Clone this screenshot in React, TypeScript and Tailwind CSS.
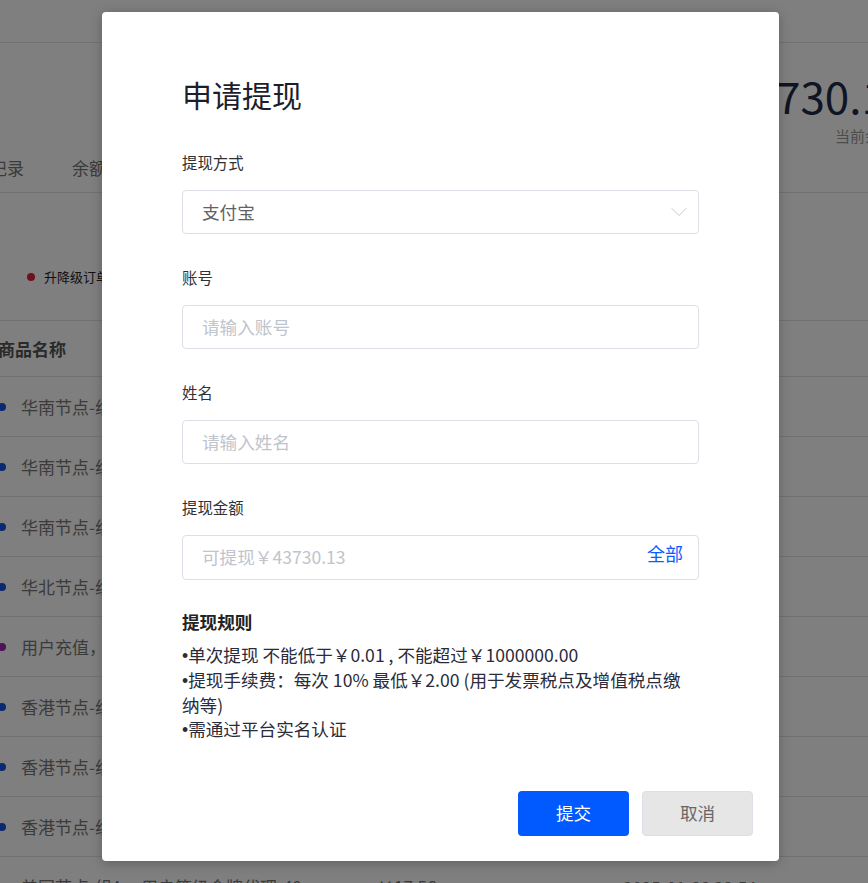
import { ChevronDown } from "lucide-react";

const ROWS = [
  { dot: "bg-[#1452e6]", name: "华南节点-组A" },
  { dot: "bg-[#1452e6]", name: "华南节点-组B" },
  { dot: "bg-[#1452e6]", name: "华南节点-组C" },
  { dot: "bg-[#1452e6]", name: "华北节点-组A" },
  { dot: "bg-[#9b27b0]", name: "用户充值，余额" },
  { dot: "bg-[#1452e6]", name: "香港节点-组A" },
  { dot: "bg-[#1452e6]", name: "香港节点-组B" },
  { dot: "bg-[#1452e6]", name: "香港节点-组C" },
];

const RULES = [
  "单次提现 不能低于￥0.01 , 不能超过￥1000000.00",
  "提现手续费：每次 10% 最低￥2.00 (用于发票税点及增值税点缴纳等)",
  "需通过平台实名认证",
];

function Field({ label, children }: { label: string; children: React.ReactNode }) {
  return (
    <div>
      <label className="block text-[15.4px] leading-[22px] text-[#303133] mb-[17px]">{label}</label>
      {children}
    </div>
  );
}

export default function App() {
  return (
    <div className="relative w-[868px] h-[883px] overflow-hidden bg-white font-['Noto_Sans_CJK_SC',sans-serif]">
      {/* page behind the dialog */}
      <div className="h-[43px] border-b border-[#e4e4e4]" />
      <div className="h-[150px] border-b border-[#e4e4e4] flex flex-col">
        <div className="pl-[776px] pt-[22px] text-[44px] leading-[60px] text-[#1f2a44] whitespace-nowrap">730.13</div>
        <div className="pl-[835px] text-[15px] leading-[22px] text-[#999] whitespace-nowrap">当前余额</div>
        <div className="mt-auto flex gap-[48px] -ml-[10px] pb-[12px] text-[17px] leading-[24px] text-[#777] whitespace-nowrap">
          <span>记录</span>
          <span>余额明细</span>
        </div>
      </div>
      <div className="h-[128px] border-b border-[#e4e4e4] flex items-center pt-[40px] pl-[27px] gap-[9px] whitespace-nowrap">
        <span className="w-[8px] h-[8px] rounded-full bg-[#e0203c]" />
        <span className="text-[13px] text-[#222]">升降级订单</span>
      </div>
      <div className="h-[56px] border-b border-[#e4e4e4] flex items-center -ml-[2px] text-[17px] font-bold text-[#555] whitespace-nowrap">
        商品名称
      </div>
      {ROWS.map((r, i) => (
        <div key={i} className="h-[60px] border-b border-[#e4e4e4] flex items-center whitespace-nowrap">
          <span className={`w-[8px] h-[8px] rounded-full -ml-[2px] ${r.dot}`} />
          <span className="ml-[15px] text-[17px] text-[#777]">{r.name}</span>
        </div>
      ))}
      <div className="h-[60px] flex items-center text-[17px] text-[#777] whitespace-nowrap">
        <span className="w-[8px] h-[8px] rounded-full -ml-[2px] bg-[#1452e6]" />
        <span className="ml-[15px] w-[120px]">美国节点-组A</span>
        <span className="w-[236px]">用户等级金牌代理-40</span>
        <span className="w-[246px]">￥17.56</span>
        <span>2025-01-28 22:54</span>
      </div>

      {/* overlay + dialog */}
      <div className="absolute inset-0 bg-black/50">
        <div className="ml-[102px] mt-[12px] w-[677px] h-[849px] bg-white rounded-[4px] shadow-[0_2px_12px_rgba(0,0,0,0.25)] flex flex-col">
          <div className="px-[80px] pt-[62px]">
            <h2 className="text-[30px] leading-[40px] text-[#1d1e2c] mb-[37px]">申请提现</h2>
            <div className="flex flex-col gap-[32px]">
              <Field label="提现方式">
                <div className="h-[44px] border border-[#dcdfe6] rounded-[4px] flex items-center pl-[19px] pr-[5px]">
                  <span className="flex-1 text-[17.6px] text-[#606266]">支付宝</span>
                  <ChevronDown size={28} strokeWidth={0.8} className="text-[#c0c4cc]" />
                </div>
              </Field>
              <Field label="账号">
                <div className="h-[44px] border border-[#dcdfe6] rounded-[4px] flex items-center pl-[19px]">
                  <input placeholder="请输入账号" className="flex-1 outline-none text-[17.6px] text-[#606266] placeholder:text-[#c0c4cc]" />
                </div>
              </Field>
              <Field label="姓名">
                <div className="h-[44px] border border-[#dcdfe6] rounded-[4px] flex items-center pl-[19px]">
                  <input placeholder="请输入姓名" className="flex-1 outline-none text-[17.6px] text-[#606266] placeholder:text-[#c0c4cc]" />
                </div>
              </Field>
              <Field label="提现金额">
                <div className="h-[45px] border border-[#dcdfe6] rounded-[4px] flex items-center pl-[19px] pr-[15px]">
                  <input placeholder="可提现￥43730.13" className="flex-1 min-w-0 outline-none text-[17.6px] text-[#606266] placeholder:text-[#c0c4cc]" />
                  <span className="self-start mt-[5px] text-[18px] leading-[24px] text-[#0a5cff]">全部</span>
                </div>
              </Field>
            </div>
            <div className="mt-[30px]">
              <h3 className="text-[17.6px] leading-[24px] font-bold text-[#222]">提现规则</h3>
              <div className="mt-[9px] max-w-[506px] text-[17.6px] leading-[24px] text-[#2b2b3a]">
                {RULES.map((t) => (
                  <p key={t}>
                    <span className="font-['Liberation_Sans',sans-serif]">•</span>
                    {t}
                  </p>
                ))}
              </div>
            </div>
          </div>
          <div className="mt-auto flex justify-end gap-[13px] pr-[26px] pb-[25px]">
            <button className="w-[111px] h-[45px] rounded-[4px] bg-[#005aff] text-white text-[17.6px]">提交</button>
            <button className="w-[111px] h-[45px] rounded-[4px] bg-[#e6e6e6] border border-[#dcdfe6] text-[#666] text-[17.6px]">取消</button>
          </div>
        </div>
      </div>
    </div>
  );
}
